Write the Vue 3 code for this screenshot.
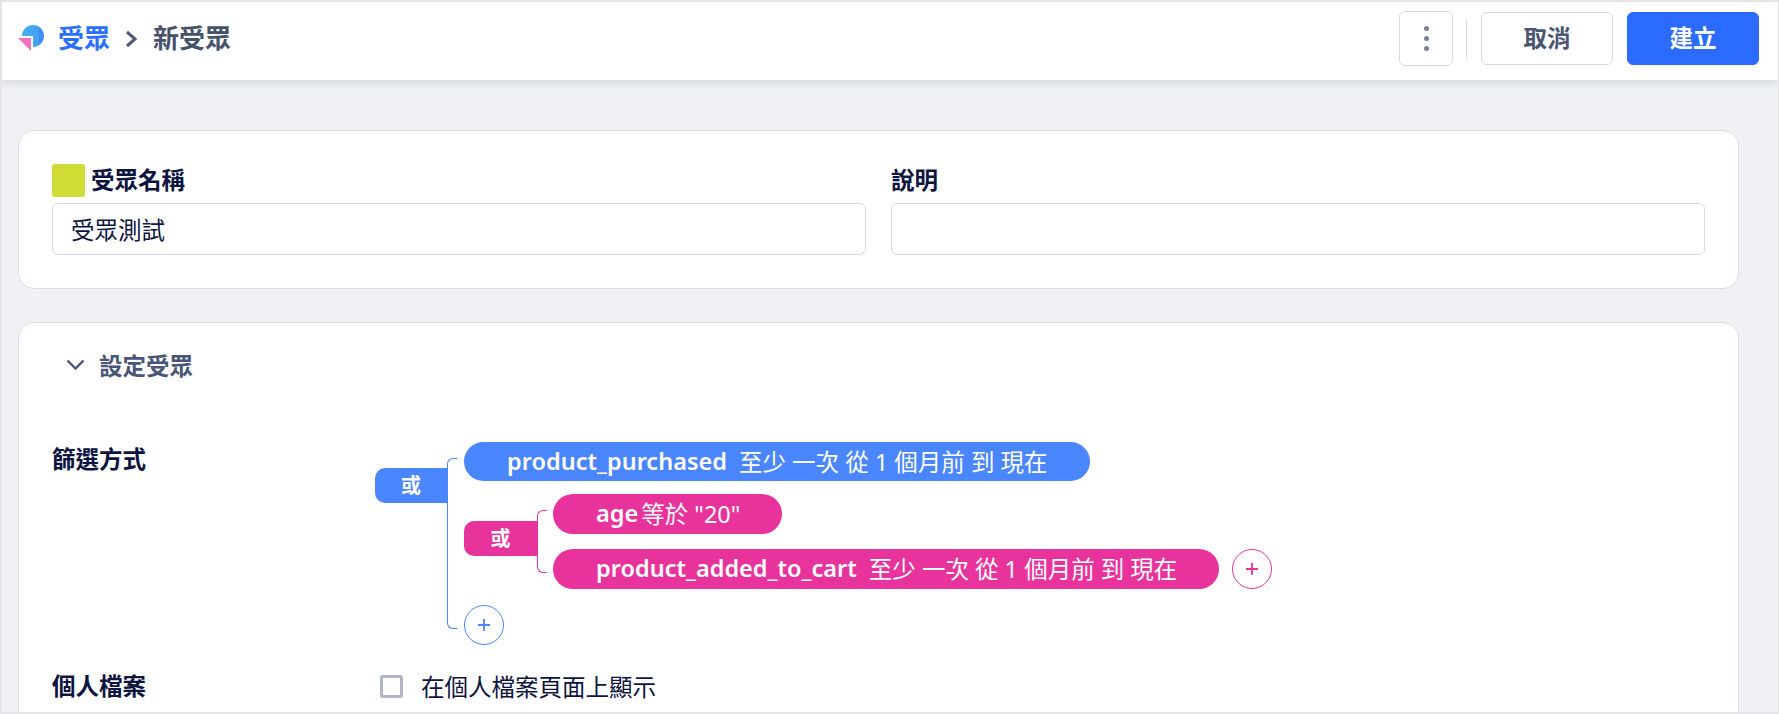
<script setup>
import { ref } from 'vue'

const audienceName = ref('受眾測試')
const description = ref('')
const showOnProfile = ref(false)
</script>

<template>
  <div class="page">
    <header class="topbar">
      <svg class="logo" width="26" height="26" viewBox="0 0 26 26">
        <defs>
          <linearGradient id="logoBlue" x1="0" y1="0" x2="1" y2="0">
            <stop offset="0" stop-color="#45b0ee" />
            <stop offset="0.75" stop-color="#42a2f2" />
            <stop offset="0.76" stop-color="#3d8dfa" />
            <stop offset="1" stop-color="#3d8dfa" />
          </linearGradient>
        </defs>
        <path d="M15 11H4A11 11 0 1 1 15 22Z" fill="url(#logoBlue)" />
        <path d="M0 13H13V26Z" fill="#f272bd" />
      </svg>
      <nav class="crumbs">
        <span class="crumb-link">受眾</span>
        <svg class="crumb-sep" width="12" height="18" viewBox="0 0 12 18">
          <path d="M2 2l8 7-8 7" fill="none" stroke="#515a78" stroke-width="3" />
        </svg>
        <span class="crumb-current">新受眾</span>
      </nav>
      <div class="actions">
        <button class="btn-more" aria-label="更多">
          <span></span><span></span><span></span>
        </button>
        <div class="divider"></div>
        <button class="btn">取消</button>
        <button class="btn btn-primary">建立</button>
      </div>
    </header>

    <main class="content">
      <section class="card card-basic">
        <div class="field">
          <div class="field-label">
            <span class="swatch"></span>
            <label>受眾名稱</label>
          </div>
          <input v-model="audienceName" class="text-input" />
        </div>
        <div class="field">
          <div class="field-label">
            <label>說明</label>
          </div>
          <input v-model="description" class="text-input" />
        </div>
      </section>

      <section class="card card-setup">
        <div class="setup-title">
          <svg width="19" height="12" viewBox="0 0 19 12">
            <path d="M1.5 1.5L9.5 9.5l8-8" fill="none" stroke="#4a5578" stroke-width="2.4" />
          </svg>
          <span>設定受眾</span>
        </div>

        <div class="row row-filter">
          <div class="row-label">篩選方式</div>
          <div class="tree tree-blue">
            <div class="tag">或</div>
            <div class="branches">
              <div class="pill pill-first">
                <b>product_purchased</b>
                <span>至少 一次 從 1 個月前 到 現在</span>
              </div>
              <div class="tree tree-pink">
                <div class="tag">或</div>
                <div class="branches">
                  <div class="pill pill-age">
                    <b>age</b>
                    <span class="tight">等於 "20"</span>
                  </div>
                  <div class="pill-line">
                    <div class="pill pill-cart">
                      <b>product_added_to_cart</b>
                      <span>至少 一次 從 1 個月前 到 現在</span>
                    </div>
                    <button class="add" aria-label="新增">
                      <svg width="14" height="14" viewBox="0 0 14 14"><path d="M7 1v12M1 7h12" stroke="currentColor" stroke-width="1.8" /></svg>
                    </button>
                  </div>
                </div>
              </div>
              <button class="add" aria-label="新增">
                <svg width="14" height="14" viewBox="0 0 14 14"><path d="M7 1v12M1 7h12" stroke="currentColor" stroke-width="1.8" /></svg>
              </button>
            </div>
          </div>
        </div>

        <div class="row row-profile">
          <div class="row-label">個人檔案</div>
          <label class="check">
            <input v-model="showOnProfile" type="checkbox" />
            <span class="check-box"></span>
            <span>在個人檔案頁面上顯示</span>
          </label>
        </div>
      </section>
    </main>
  </div>
</template>

<style>
html,
body {
  margin: 0;
  background: #eff1f5;
}
</style>

<style scoped>
.page {
  box-sizing: border-box;
  height: 714px;
  overflow: hidden;
  border: 2px solid #e4e4e6;
  border-right-width: 1px;
  background: #eff1f5;
  color: #0d1440;
  font-family: "Noto Sans", "Noto Sans CJK TC", sans-serif;
}
.topbar {
  position: relative;
  display: flex;
  align-items: center;
  box-sizing: border-box;
  height: 78px;
  padding: 0 19px 5px 16px;
  background: #fff;
  box-shadow: 0 2px 8px rgba(40, 50, 70, 0.16);
}
.logo {
  margin: 0 14px 1px 0;
}
.crumbs {
  display: flex;
  align-items: center;
  margin-bottom: 1px;
  font-size: 26px;
  font-weight: 700;
  line-height: 36px;
}
.crumb-link {
  color: #2b6fff;
}
.crumb-sep {
  margin: 2px 16px 0 15px;
}
.crumb-current {
  color: #46526c;
}
.actions {
  display: flex;
  align-items: center;
  margin-left: auto;
}
.btn-more {
  display: flex;
  flex-direction: column;
  align-items: center;
  justify-content: center;
  gap: 5px;
  box-sizing: border-box;
  width: 54px;
  height: 55px;
  padding: 0;
  border: 1px solid #d9dae0;
  border-radius: 6px;
  background: #fff;
}
.btn-more span {
  width: 5px;
  height: 5px;
  border-radius: 50%;
  background: #7a8098;
}
.divider {
  width: 1px;
  height: 39px;
  margin: 0 14px 0 13px;
  background: #dcdde2;
}
.btn {
  box-sizing: border-box;
  width: 132px;
  height: 53px;
  padding: 0 0 3px;
  border: 1px solid #d9dae0;
  border-radius: 6px;
  background: #fff;
  color: #4a5572;
  font-family: inherit;
  font-size: 23.5px;
  font-weight: 700;
}
.btn-primary {
  margin-left: 14px;
  border-color: #2b6bff;
  background: #2b6bff;
  color: #fff;
}
.content {
  display: flex;
  flex-direction: column;
  gap: 33px;
  padding: 50px 39px 0 16px;
}
.card {
  flex-shrink: 0;
  box-sizing: border-box;
  border: 1px solid #dcdde3;
  border-radius: 16px;
  background: #fff;
}
.card-basic {
  display: grid;
  grid-template-columns: 1fr 1fr;
  gap: 25px;
  height: 159px;
  padding: 33px;
}
.field-label {
  display: flex;
  align-items: center;
  gap: 6px;
  height: 33px;
  margin-bottom: 6px;
  font-size: 23.5px;
  font-weight: 700;
}
.field-label label {
  margin-bottom: 3px;
}
.swatch {
  width: 33px;
  height: 33px;
  border-radius: 3px;
  background: #cfdc35;
}
.text-input {
  display: block;
  box-sizing: border-box;
  width: 100%;
  height: 52px;
  padding: 0 18px;
  border: 1px solid #d9dae0;
  border-radius: 6px;
  outline: none;
  color: #0d1440;
  font-family: inherit;
  font-size: 23.5px;
}
.card-setup {
  height: 420px;
  padding: 26px 33px;
}
.setup-title {
  display: flex;
  align-items: center;
  gap: 14px;
  height: 32px;
  padding-left: 14px;
  color: #4a5578;
  font-size: 23.5px;
  font-weight: 700;
}
.row {
  display: flex;
}
.row-filter {
  margin-top: 61px;
}
.row-profile {
  align-items: center;
  margin-top: 24px;
}
.row-label {
  width: 323px;
  flex-shrink: 0;
  font-size: 23.5px;
  font-weight: 700;
  line-height: 34px;
}
.tree {
  display: flex;
  align-items: flex-start;
}
.tree-blue {
  --tone: #4a86ff;
}
.tree-pink {
  --tone: #e8339d;
}
.tag {
  box-sizing: border-box;
  width: 72px;
  height: 35px;
  border-radius: 10px 0 0 10px;
  background: var(--tone);
  color: #fff;
  font-size: 20px;
  font-weight: 700;
  line-height: 35px;
  text-align: center;
}
.tree-blue > .tag {
  margin-top: 26px;
}
.tree-pink > .tag {
  width: 73px;
  margin-top: 27px;
}
.branches {
  position: relative;
  display: flex;
  flex-direction: column;
  align-items: flex-start;
  padding-left: 17px;
}
.branches::before {
  content: "";
  position: absolute;
  top: 16px;
  bottom: 16px;
  left: 0;
  width: 10px;
  box-sizing: border-box;
  border: 1px solid var(--tone);
  border-right: none;
  border-radius: 6px 0 0 6px;
}
.tree-pink > .branches {
  padding-left: 16px;
}
.pill {
  display: flex;
  align-items: center;
  gap: 12px;
  box-sizing: border-box;
  height: 40px;
  padding: 0 43px 2px;
  border-radius: 20px;
  background: var(--tone);
  color: #fff;
  font-size: 23.5px;
  white-space: nowrap;
}
.pill b {
  font-weight: 600;
}
.pill .tight {
  margin-left: -9px;
}
.pill-first {
  width: 626px;
  height: 39px;
  margin-bottom: 13px;
}
.pill-age {
  width: 229px;
  margin-bottom: 15px;
}
.pill-cart {
  width: 666px;
}
.pill-line {
  display: flex;
  gap: 13px;
}
.add {
  display: flex;
  align-items: center;
  justify-content: center;
  box-sizing: border-box;
  width: 40px;
  height: 40px;
  padding: 0;
  border: 1px solid var(--tone);
  border-radius: 50%;
  background: #fff;
  color: var(--tone);
}
.tree-pink {
  margin-bottom: 16px;
}
.check {
  display: flex;
  align-items: center;
  margin-left: 5px;
  font-size: 23.5px;
}
.check input {
  display: none;
}
.check-box {
  box-sizing: border-box;
  width: 23px;
  height: 23px;
  margin-right: 18px;
  border: 3px solid #b3b5c6;
  border-radius: 3px;
}
</style>
